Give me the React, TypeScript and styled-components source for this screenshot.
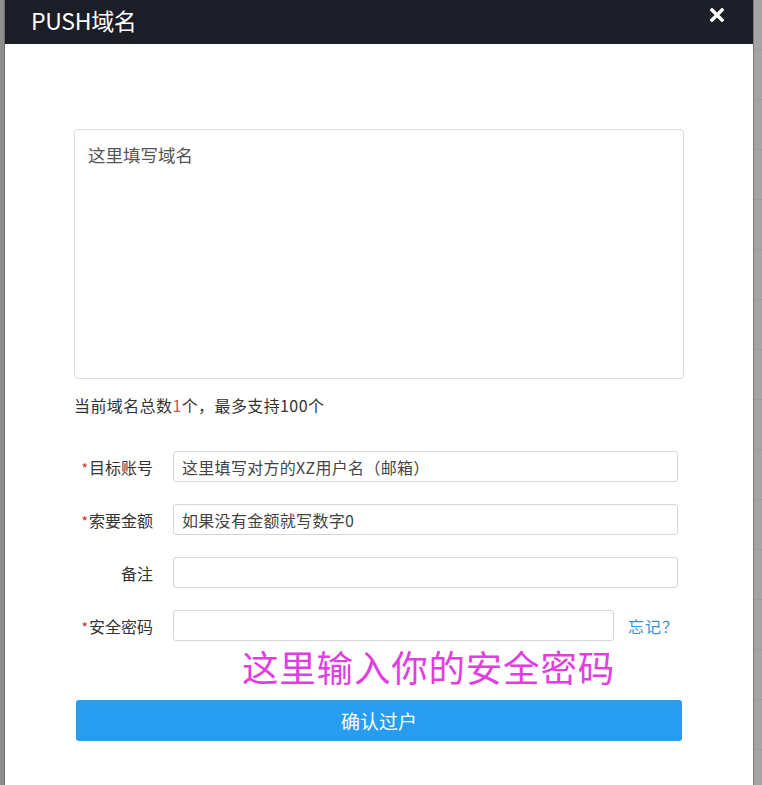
import React from "react";
import styled, { createGlobalStyle } from "styled-components";

const Global = createGlobalStyle`
  html, body { margin: 0; padding: 0; }
  body {
    background: #9a9a9a;
    font-family: "Noto Sans CJK SC", "Microsoft YaHei", sans-serif;
    overflow: hidden;
  }
`;

const Screen = styled.div`
  display: flex;
  width: 762px;
  height: 785px;
  overflow: hidden;
`;

const Backdrop = styled.div<{ $w: number; $side: "left" | "right" }>`
  width: ${(p) => p.$w}px;
  flex: none;
  background-color: ${(p) => (p.$side === "left" ? "#8e8e8e" : "#a4a4a4")};
  background-image: repeating-linear-gradient(
    to bottom,
    transparent 0px,
    transparent 49px,
    rgba(0, 0, 0, 0.06) 49px,
    rgba(0, 0, 0, 0.06) 50px
  );
  border-${(p) => (p.$side === "left" ? "right" : "left")}: 1px solid
    ${(p) => (p.$side === "left" ? "#6e6e6e" : "#7c7c7c")};
  box-sizing: border-box;
`;

const Modal = styled.div`
  flex: 1;
  display: flex;
  flex-direction: column;
  background: #ffffff;
`;

const Header = styled.div`
  height: 44px;
  flex: none;
  background: #1b1d27;
  display: flex;
  justify-content: space-between;
  align-items: flex-start;
  padding: 3px 29px 0 26px;
  box-sizing: border-box;
`;

const Title = styled.h2`
  margin: 0;
  color: #ffffff;
  font-size: 23px;
  font-weight: 400;
  line-height: 34px;
  letter-spacing: -0.3px;
`;

const Close = styled.button`
  border: none;
  background: transparent;
  padding: 0;
  margin-top: 5px;
  width: 14px;
  height: 14px;
  display: flex;
  cursor: pointer;
`;

const Body = styled.div`
  padding: 85px 69px 0 69px;
  display: flex;
  flex-direction: column;
`;

const DomainArea = styled.textarea`
  width: 610px;
  height: 250px;
  box-sizing: border-box;
  border: 1px solid #dcdcdc;
  border-radius: 4px;
  padding: 13px 13px;
  font-family: inherit;
  font-size: 17.5px;
  line-height: 24px;
  color: #333;
  resize: none;
  outline: none;
  &::placeholder { color: #555; }
`;

const CountLine = styled.div`
  margin-top: 14px;
  font-size: 16px;
  letter-spacing: 0.4px;
  line-height: 24px;
  color: #333;
`;

const Red = styled.span`
  color: #d9534f;
`;

const Form = styled.div`
  margin-top: 34px;
  display: flex;
  flex-direction: column;
  gap: 22px;
  width: 604px;
`;

const Row = styled.div`
  display: flex;
  align-items: center;
  height: 31px;
`;

const Label = styled.label`
  width: 79px;
  flex: none;
  text-align: right;
  font-size: 16px;
  color: #333;
  margin-right: 20px;
  white-space: nowrap;
`;

const Star = styled.span`
  color: #c9302c;
  font-size: 14px;
  margin-right: 1px;
`;

const Field = styled.input<{ $w?: number }>`
  flex: ${(p) => (p.$w ? "none" : "1")};
  width: ${(p) => (p.$w ? `${p.$w}px` : "auto")};
  min-width: 0;
  height: 31px;
  box-sizing: border-box;
  border: 1px solid #d6d6d6;
  border-radius: 3px;
  padding: 0 8px;
  font-family: inherit;
  font-size: 16px;
  letter-spacing: 0.3px;
  color: #333;
  outline: none;
  &::placeholder { color: #444; }
`;

const ForgotLink = styled.a`
  margin-left: 14px;
  font-size: 16px;
  letter-spacing: 1px;
  color: #3d8fd6;
  text-decoration: none;
  white-space: nowrap;
`;

const Annotation = styled.div`
  margin-top: 4px;
  padding-left: 168px;
  font-size: 36.5px;
  line-height: 44px;
  color: #e03ee0;
  letter-spacing: 0.8px;
  white-space: nowrap;
`;

const Submit = styled.button`
  margin: 11px 2px 0 2px;
  height: 41px;
  border: none;
  border-radius: 3px;
  background: #279df0;
  color: #ffffff;
  font-family: inherit;
  font-size: 19px;
  cursor: pointer;
`;

const rows = [
  { label: "目标账号", required: true, placeholder: "这里填写对方的XZ用户名（邮箱）" },
  { label: "索要金额", required: true, placeholder: "如果没有金额就写数字0" },
  { label: "备注", required: false, placeholder: "" },
];

export default function App() {
  return (
    <>
      <Global />
      <Screen>
        <Backdrop $w={5} $side="left" />
        <Modal>
          <Header>
            <Title>PUSH域名</Title>
            <Close aria-label="close">
              <svg width="14" height="14" viewBox="0 0 14 14">
                <path d="M2 2 L12 12 M12 2 L2 12" stroke="#fff" strokeWidth="3.4" strokeLinecap="square" />
              </svg>
            </Close>
          </Header>
          <Body>
            <DomainArea placeholder="这里填写域名" />
            <CountLine>
              当前域名总数<Red>1</Red>个，最多支持100个
            </CountLine>
            <Form>
              {rows.map((r) => (
                <Row key={r.label}>
                  <Label>
                    {r.required && <Star>*</Star>}
                    {r.label}
                  </Label>
                  <Field placeholder={r.placeholder} />
                </Row>
              ))}
              <Row>
                <Label>
                  <Star>*</Star>安全密码
                </Label>
                <Field type="password" $w={441} />
                <ForgotLink href="#">忘记？</ForgotLink>
              </Row>
            </Form>
            <Annotation>这里输入你的安全密码</Annotation>
            <Submit>确认过户</Submit>
          </Body>
        </Modal>
        <Backdrop $w={9} $side="right" />
      </Screen>
    </>
  );
}
